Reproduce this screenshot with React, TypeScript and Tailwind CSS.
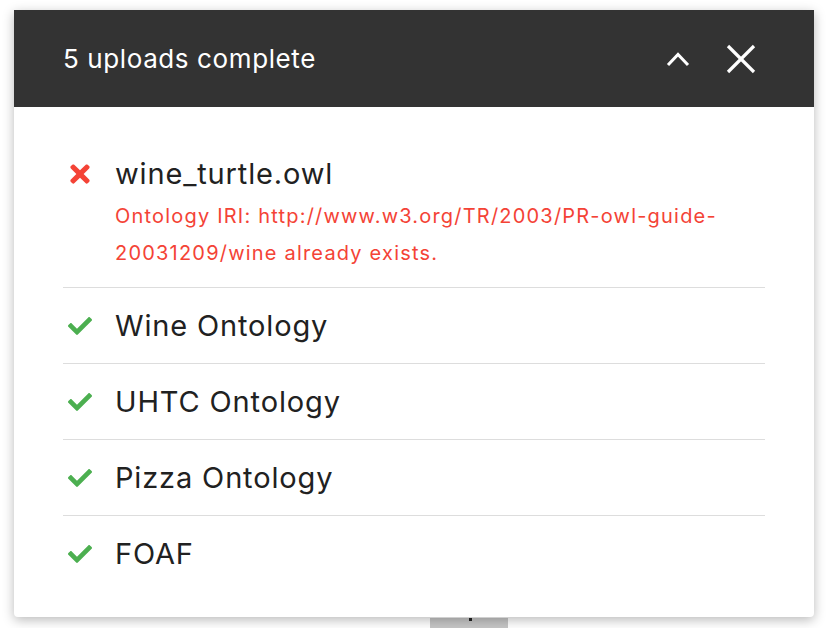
import React from "react";
import { FaCheck, FaTimes } from "react-icons/fa";

type Item = { name: string; ok: boolean; error?: string };

const items: Item[] = [
  {
    name: "wine_turtle.owl",
    ok: false,
    error:
      "Ontology IRI: http://www.w3.org/TR/2003/PR-owl-guide-20031209/wine already exists.",
  },
  { name: "Wine Ontology", ok: true },
  { name: "UHTC Ontology", ok: true },
  { name: "Pizza Ontology", ok: true },
  { name: "FOAF", ok: true },
];

export default function App() {
  return (
    <div className="w-[832px] h-[628px] bg-white overflow-hidden relative" style={{ fontFamily: "Inter, 'Noto Sans', sans-serif" }}>
      <div className="pt-[10px] pl-[14px]">
        <div className="relative z-10 w-[800px] bg-white rounded-b-[4px] shadow-[0_3px_12px_rgba(0,0,0,0.28)]">
          <div className="h-[97px] bg-[#333333] flex items-center pl-[49px] pr-[58px]">
            <div className="flex-1 text-white text-[26px] tracking-[0.6px]">5 uploads complete</div>
            <svg width="24" height="16" viewBox="0 0 24 16" className="mr-[36px]">
              <polyline points="2,14 12,3.5 22,14" fill="none" stroke="white" strokeWidth="3" />
            </svg>
            <svg width="30" height="30" viewBox="0 0 30 30">
              <line x1="2" y1="2" x2="28" y2="28" stroke="white" strokeWidth="3.2" />
              <line x1="28" y1="2" x2="2" y2="28" stroke="white" strokeWidth="3.2" />
            </svg>
          </div>
          <div className="px-[49px] pt-[29px] pb-[26px]">
            {items.map((it, i) => (
              <div
                key={i}
                className={`flex ${i < items.length - 1 ? "border-b border-[#dddddd]" : ""} ${i === 0 ? "pt-[20px] pb-[15px]" : "pt-[20px] pb-[19px]"}`}
              >
                <div className="w-[52px] shrink-0 h-[36px] flex items-center pl-[5px]">
                  {it.ok ? (
                    <FaCheck size={24} color="#4caf50" />
                  ) : (
                    <FaTimes size={28} color="#f44336" className="-ml-[2px]" />
                  )}
                </div>
                <div className="flex-1">
                  <div className="text-[29px] leading-[36px] tracking-[0.85px] text-[#212121]">{it.name}</div>
                  {it.error && (
                    <div className="mt-[6px] text-[20px] leading-[37px] tracking-[1.2px] text-[#f44336] pr-[40px]">{it.error}</div>
                  )}
                </div>
              </div>
            ))}
          </div>
        </div>
        <div className="ml-[416px] mt-[1px] w-[78px] h-[12px] bg-[#c6c6c6] relative">
          <div className="absolute left-[39px] top-0 w-[3px] h-[3px] bg-[#222]" />
        </div>
      </div>
    </div>
  );
}
